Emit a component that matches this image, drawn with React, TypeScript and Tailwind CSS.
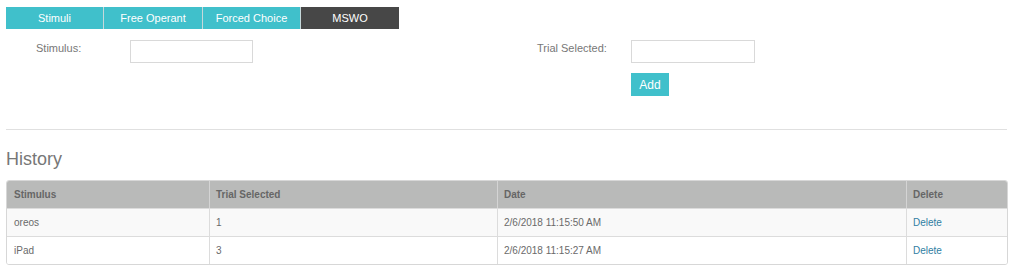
import React from "react";

const tabs = [
  { t: "Stimuli", c: "w-[98px] bg-[#40c0cb] border-r border-[#c6d8da]" },
  { t: "Free Operant", c: "w-[99px] bg-[#40c0cb] border-r border-[#c6d8da]" },
  { t: "Forced Choice", c: "w-[98px] bg-[#40c0cb] border-r border-[#c6d8da]" },
  { t: "MSWO", c: "w-[98px] bg-[#474747]" },
];
const rows = [
  { s: "oreos", t: "1", d: "2/6/2018 11:15:50 AM" },
  { s: "iPad", t: "3", d: "2/6/2018 11:15:27 AM" },
];

export default function App() {
  return (
    <div className="w-[1014px] h-[272px] bg-white text-[#666] overflow-hidden" style={{ fontFamily: '"Liberation Sans", Arial, sans-serif' }}>
      <div className="pl-[6px] pt-[7px] flex">
        {tabs.map((t) => (
          <div key={t.t} className={`h-[22px] flex items-center justify-center text-[11px] text-white ${t.c}`}>
            {t.t}
          </div>
        ))}
      </div>
      <div className="flex pt-[11px] h-[100px]">
        <div className="w-[501px] flex">
          <div className="pl-[36px] w-[130px] pt-[1px] leading-[14px] text-[11px] text-[#777]">Stimulus:</div>
          <div className="w-[123px] h-[23px] border border-[#d9d9d9] bg-white"></div>
        </div>
        <div className="flex">
          <div className="pl-[36px] w-[130px] pt-[1px] leading-[14px] text-[11px] text-[#777]">Trial Selected:</div>
          <div className="flex flex-col">
            <div className="w-[124px] h-[23px] border border-[#d9d9d9] bg-white"></div>
            <div className="mt-[10px] w-[38px] h-[23px] bg-[#40c0cb] text-white text-[12px] flex items-center justify-center">Add</div>
          </div>
        </div>
      </div>
      <div className="mx-[6px] w-[1001px] border-t border-[#e0e0e0]"></div>
      <div className="pl-[6px] pt-[18px] text-[18px] leading-[22px] text-[#777]">History</div>
      <div className="ml-[6px] mt-[10px] w-[1002px] border border-[#d7d7d7] rounded-[3px] overflow-hidden text-[10px]">
        <div className="flex h-[27px] bg-[#b9bab9] font-bold text-[#666]">
          <div className="w-[203px] pl-[7px] flex items-center border-r border-[#d4d4d4]">Stimulus</div>
          <div className="w-[288px] pl-[6px] flex items-center border-r border-[#d4d4d4]">Trial Selected</div>
          <div className="w-[409px] pl-[6px] flex items-center border-r border-[#d4d4d4]">Date</div>
          <div className="flex-1 pl-[6px] flex items-center">Delete</div>
        </div>
        {rows.map((r, i) => (
          <div key={r.s} className={`flex h-[28px] border-t border-[#dcdcdc] text-[#6a6a6a] ${i === 0 ? "bg-[#f9f9f9]" : "bg-white"}`}>
            <div className="w-[203px] pl-[7px] flex items-center border-r border-[#dcdcdc]">{r.s}</div>
            <div className="w-[288px] pl-[6px] flex items-center border-r border-[#dcdcdc]">{r.t}</div>
            <div className="w-[409px] pl-[6px] flex items-center border-r border-[#dcdcdc]">{r.d}</div>
            <div className="flex-1 pl-[6px] flex items-center text-[#2f7ea3]">Delete</div>
          </div>
        ))}
      </div>
    </div>
  );
}
